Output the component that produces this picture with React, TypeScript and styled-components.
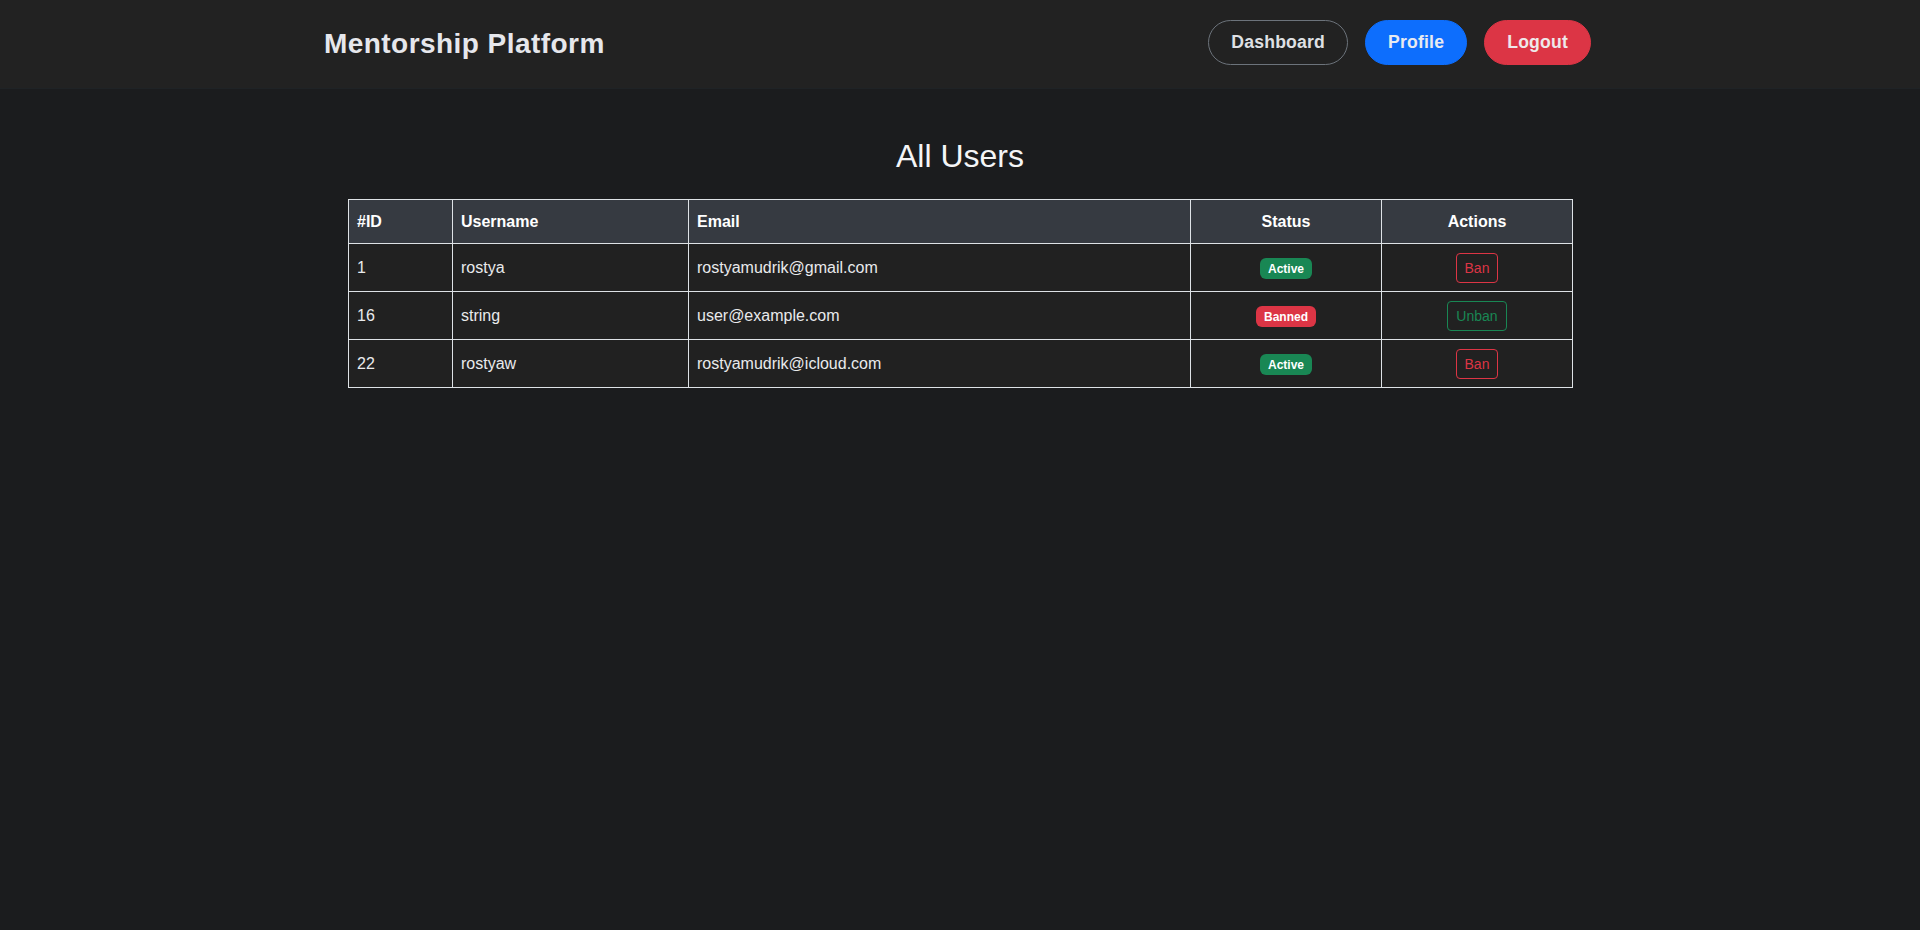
import React from "react";
import styled, { createGlobalStyle } from "styled-components";

const GlobalStyle = createGlobalStyle`
  html, body {
    margin: 0;
    padding: 0;
    background: #1b1c1e;
    font-family: "Liberation Sans", Arial, sans-serif;
    color: #dee2e6;
  }
  * { box-sizing: border-box; }
`;

const Page = styled.div`
  min-height: 930px;
  background: #1b1c1e;
`;

const NavBar = styled.header`
  height: 88px;
  background: #222222;
  box-shadow: 0 1px 0 #1f2326;
`;

const NavInner = styled.div`
  width: 1320px;
  height: 100%;
  margin: 0 auto;
  padding: 0 29px 0 24px;
  display: flex;
  align-items: center;
  justify-content: space-between;
`;

const Brand = styled.div`
  font-size: 28px;
  font-weight: 700;
  letter-spacing: 0.45px;
  color: #e6e7ec;
`;

const NavActions = styled.nav`
  display: flex;
  align-items: center;
  gap: 17px;
  margin-bottom: 3px;
`;

type Tone = "outline" | "primary" | "danger";

const toneStyles: Record<Tone, { bg: string; border: string; color: string }> = {
  outline: { bg: "transparent", border: "#6c737b", color: "#dfe0e4" },
  primary: { bg: "#0d6efd", border: "#0d6efd", color: "#e8eaf0" },
  danger: { bg: "#dc3545", border: "#dc3545", color: "#eee8ea" },
};

const NavButton = styled.button<{ $tone: Tone }>`
  font-family: "Liberation Sans", Arial, sans-serif;
  font-size: 17.6px;
  font-weight: 700;
  line-height: 26.4px;
  padding: 8px 22px;
  border-radius: 999px;
  border: 1px solid ${(p) => toneStyles[p.$tone].border};
  background: ${(p) => toneStyles[p.$tone].bg};
  color: ${(p) => toneStyles[p.$tone].color};
  letter-spacing: 0.2px;
  cursor: pointer;
`;

const Main = styled.main`
  width: 1224px;
  margin: 0 auto;
  padding-top: 49px;
`;

const Title = styled.h2`
  margin: 0 0 24px;
  font-size: 32px;
  font-weight: 400;
  line-height: 1.2;
  text-align: center;
  color: #f4f5f7;
`;

const Table = styled.table`
  width: 1224px;
  border-collapse: collapse;
  table-layout: fixed;
  font-size: 16px;
`;

const HeadCell = styled.th<{ $center?: boolean }>`
  background: #363a41;
  color: #ffffff;
  font-weight: 700;
  text-align: ${(p) => (p.$center ? "center" : "left")};
  padding: 9.5px 8px;
  line-height: 24px;
  border: 1px solid #dee2e6;
`;

const Cell = styled.td<{ $center?: boolean }>`
  background: #212121;
  color: #e9eaec;
  text-align: ${(p) => (p.$center ? "center" : "left")};
  vertical-align: middle;
  padding: 8px;
  height: 48px;
  line-height: 24px;
  border: 1px solid #dee2e6;
`;

const Badge = styled.span<{ $ok: boolean }>`
  display: inline-block;
  font-size: 12px;
  font-weight: 700;
  line-height: 1;
  padding: 4.2px 7.8px;
  border-radius: 6px;
  color: #ffffff;
  background: ${(p) => (p.$ok ? "#198754" : "#dc3545")};
  vertical-align: middle;
`;

const ActionButton = styled.button<{ $ok: boolean }>`
  font-family: "Liberation Sans", Arial, sans-serif;
  font-size: 14px;
  line-height: 20px;
  padding: 4px 8px;
  border-radius: 4px;
  background: transparent;
  border: 1px solid ${(p) => (p.$ok ? "#198754" : "#dc3545")};
  color: ${(p) => (p.$ok ? "#198754" : "#dc3545")};
  cursor: pointer;
  vertical-align: middle;
`;

const users = [
  { id: 1, username: "rostya", email: "rostyamudrik@gmail.com", banned: false },
  { id: 16, username: "string", email: "user@example.com", banned: true },
  { id: 22, username: "rostyaw", email: "rostyamudrik@icloud.com", banned: false },
];

export default function App() {
  return (
    <Page>
      <GlobalStyle />
      <NavBar>
        <NavInner>
          <Brand>Mentorship Platform</Brand>
          <NavActions>
            <NavButton $tone="outline">Dashboard</NavButton>
            <NavButton $tone="primary">Profile</NavButton>
            <NavButton $tone="danger">Logout</NavButton>
          </NavActions>
        </NavInner>
      </NavBar>
      <Main>
        <Title>All Users</Title>
        <Table>
          <colgroup>
            <col style={{ width: 104 }} />
            <col style={{ width: 236 }} />
            <col style={{ width: 502 }} />
            <col style={{ width: 191 }} />
            <col style={{ width: 191 }} />
          </colgroup>
          <thead>
            <tr>
              <HeadCell>#ID</HeadCell>
              <HeadCell>Username</HeadCell>
              <HeadCell>Email</HeadCell>
              <HeadCell $center>Status</HeadCell>
              <HeadCell $center>Actions</HeadCell>
            </tr>
          </thead>
          <tbody>
            {users.map((u) => (
              <tr key={u.id}>
                <Cell>{u.id}</Cell>
                <Cell>{u.username}</Cell>
                <Cell>{u.email}</Cell>
                <Cell $center>
                  <Badge $ok={!u.banned}>{u.banned ? "Banned" : "Active"}</Badge>
                </Cell>
                <Cell $center>
                  <ActionButton $ok={u.banned}>{u.banned ? "Unban" : "Ban"}</ActionButton>
                </Cell>
              </tr>
            ))}
          </tbody>
        </Table>
      </Main>
    </Page>
  );
}
